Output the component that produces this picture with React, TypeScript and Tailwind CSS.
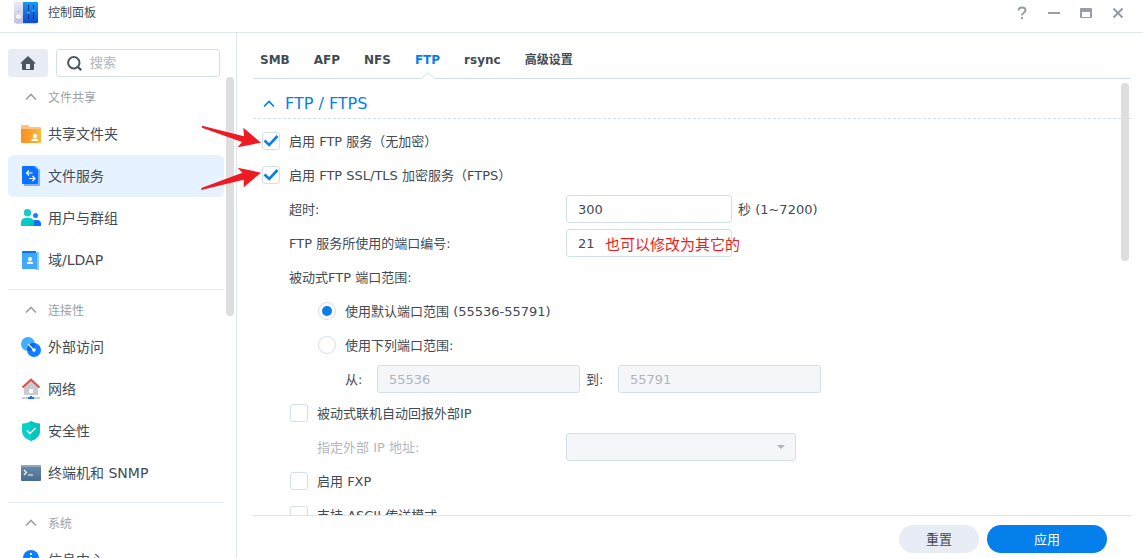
import React, { useState } from "react";
import clsx from "clsx";

interface NavItem {
  label: string;
  icon: React.ReactNode;
}

interface NavGroup {
  title: string;
  items: NavItem[];
}

const SharedFolderIcon = () => (
  <svg viewBox="0 0 20 20" className="size-5">
    <defs>
      <linearGradient id="folder" x1="0" x2="1">
        <stop offset="0" stopColor="#fb8f1f" />
        <stop offset="1" stopColor="#feb73c" />
      </linearGradient>
    </defs>
    <path d="M0 2a1 1 0 0 1 1-1h6l2 2h10a1 1 0 0 1 1 1v3H0z" fill="#fdc37e" />
    <path d="M0 5h20v13a1 1 0 0 1-1 1H1a1 1 0 0 1-1-1z" fill="url(#folder)" />
    <circle cx="14" cy="12" r="2.2" fill="#fff" />
    <path d="M10.500 17v-1q0-1.300 1.500-1.300h3.500q1.500 0 1.500 1.300v1z" fill="#fff" />
  </svg>
);

const FileServicesIcon = () => (
  <svg viewBox="0 0 20 20" className="size-5">
    <path d="M3 0h12l4 4v15a1 1 0 0 1-1 1H3z" fill="#77b0ff" />
    <path d="M2 0h11l4 4v13a1 1 0 0 1-1 1H2a1 1 0 0 1-1-1V1a1 1 0 0 1 1-1z" fill="#0a72ff" />
    <path d="M11.500 7H5.500m2.500-2.500L5.500 7 8 9.500M8 12.500h6M11.500 10l2.500 2.500-2.500 2.500" fill="none" stroke="#fff" strokeWidth="1.200" />
  </svg>
);

const UsersIcon = () => (
  <svg viewBox="0 0 20 20" className="size-5">
    <circle cx="14.500" cy="7.500" r="2.500" fill="#1282ff" />
    <path d="M11 18v-3q0-3 3-3h2q4 0 4 4v2z" fill="#0a72ff" />
    <circle cx="6.500" cy="4.700" r="3.700" fill="#1bc9c4" />
    <path d="M0 18v-3q0-5 5-5h3q5 0 5 5v3z" fill="#06ccc5" />
    <path d="M9 18v-3l4-1v4z" fill="#06bdb8" />
  </svg>
);

const LdapIcon = () => (
  <svg viewBox="0 0 20 20" className="size-5">
    <path d="M2 1h13v3H1V2a1 1 0 0 1 1-1z" fill="#0a72ff" />
    <path d="M15 2h3v18h-3z" fill="#8acbff" />
    <path d="M1 3h15v16H2a1 1 0 0 1-1-1z" fill="#41a8ff" />
    <circle cx="9" cy="9" r="2" fill="#fff" />
    <path d="M6 14v-1q0-1.300 1.500-1.300h3q1.500 0 1.500 1.300v1z" fill="#fff" />
  </svg>
);

const ExternalIcon = () => (
  <svg viewBox="0 0 20 20" className="size-5">
    <circle cx="7" cy="7" r="7" fill="#3fb0ff" />
    <circle cx="13" cy="13" r="7" fill="#1180ff" />
    <path d="M6.200 12.300A7 7 0 0 1 12.500 6 7 7 0 0 1 14 7.200 7 7 0 0 1 7.400 14z" fill="#0466ee" />
    <path d="m7 7 5 5" stroke="#fff" strokeWidth="1.300" />
    <circle cx="13" cy="13" r="1.800" fill="#fff" />
  </svg>
);

const NetworkIcon = () => (
  <svg viewBox="0 0 20 22" className="h-[22px] w-5">
    <path d="M3 9l7-6.500L17 9v8H3z" fill="#c9cbd0" />
    <path d="M1.500 9.500 10 1.700l8.500 7.800" fill="none" stroke="#d9504e" strokeWidth="2" />
    <path d="M8 11h4v4H8z" fill="#fff" />
    <path d="M1 19h18v2H1z" fill="#c9cfd6" />
    <path d="M9 18h2v1h2v2H7v-2h2z" fill="#0a78ff" />
  </svg>
);

const SecurityIcon = () => (
  <svg viewBox="0 0 20 20" className="size-5">
    <path d="M10 0q4 2.500 9 2.700V10q0 7-9 10-9-3-9-10V2.700Q6 2.500 10 0z" fill="#09d1ca" />
    <path d="M10 0q4 2.500 9 2.700V10q0 7-9 10z" fill="#06c5bf" />
    <path d="m6 9.500 3 3 5.500-5.500" fill="none" stroke="#fff" strokeWidth="1.500" />
  </svg>
);

const TerminalIcon = () => (
  <svg viewBox="0 0 20 20" className="size-5">
    <defs>
      <linearGradient id="terminal" x1="0" y1="0" x2="0" y2="1">
        <stop offset="0" stopColor="#6b8cad" />
        <stop offset="1" stopColor="#476b90" />
      </linearGradient>
    </defs>
    <rect y="2" width="20" height="16" rx="1" fill="url(#terminal)" />
    <path d="M0 4V3a1 1 0 0 1 1-1h18a1 1 0 0 1 1 1v1z" fill="#8fa9c2" />
    <path d="m3 7 2.500 2.500L3 12M7 12h5" fill="none" stroke="#fff" strokeWidth="1.200" />
  </svg>
);

const InfoIcon = () => (
  <svg viewBox="0 0 20 20" className="size-5">
    <circle cx="10" cy="8" r="8" fill="#0f7dff" />
    <path d="M9 3h2v2H9zM9 7h2v6H9z" fill="#fff" />
  </svg>
);

const ControlPanelIcon = () => (
  <svg viewBox="0 0 24 24" className="size-6">
    <defs>
      <linearGradient id="knob" x1="0" y1="0" x2="0" y2="1">
        <stop offset="0" stopColor="#e9e9fb" />
        <stop offset="1" stopColor="#c3c4d8" />
      </linearGradient>
      <linearGradient id="mixer" x1="0" y1="0" x2="0" y2="1">
        <stop offset="0" stopColor="#149cf2" />
        <stop offset="1" stopColor="#1149d6" />
      </linearGradient>
    </defs>
    <path d="M1 22h22l-1 2H2z" fill="#d3d5dc" />
    <path d="M1 2h9v21H1a1 1 0 0 1-1-1V3a1 1 0 0 1 1-1z" fill="url(#knob)" />
    <path d="M9 2h14a1 1 0 0 1 1 1v19a1 1 0 0 1-1 1H9z" fill="url(#mixer)" />
    <circle cx="4.500" cy="11.500" r=".5" fill="#777a90" />
    <circle cx="4.500" cy="17" r="2.700" fill="#a9abc0" />
    <circle cx="4.500" cy="16.500" r="2.600" fill="#f2f2fb" />
    <path d="M14.500 5v14M19.500 5v14" stroke="#07327f" />
    <circle cx="14.500" cy="12.500" r="1.600" fill="#2d97ff" />
    <circle cx="19.500" cy="10.500" r="1.600" fill="#2d97ff" />
  </svg>
);

const Chevron = ({ className }: { className?: string }) => (
  <svg viewBox="0 0 12 8" className={clsx("h-2 w-3 shrink-0", className)}>
    <path d="m1 6.500 5-5 5 5" fill="none" stroke="currentColor" strokeWidth="1.700" />
  </svg>
);

const groups: NavGroup[] = [
  {
    title: "文件共享",
    items: [
      { label: "共享文件夹", icon: <SharedFolderIcon /> },
      { label: "文件服务", icon: <FileServicesIcon /> },
      { label: "用户与群组", icon: <UsersIcon /> },
      { label: "域/LDAP", icon: <LdapIcon /> },
    ],
  },
  {
    title: "连接性",
    items: [
      { label: "外部访问", icon: <ExternalIcon /> },
      { label: "网络", icon: <NetworkIcon /> },
      { label: "安全性", icon: <SecurityIcon /> },
      { label: "终端机和 SNMP", icon: <TerminalIcon /> },
    ],
  },
  {
    title: "系统",
    items: [{ label: "信息中心", icon: <InfoIcon /> }],
  },
];

const tabs = ["SMB", "AFP", "NFS", "FTP", "rsync", "高级设置"];

const TitleBar = () => (
  <header className="flex h-[33px] shrink-0 items-start justify-between border-b border-[#dfe6ee] pr-[9px] pl-3.5">
    <div className="flex h-6 items-center gap-2.5">
      <ControlPanelIcon />
      <h1 className="pt-0.5 text-xs">控制面板</h1>
    </div>
    <div className="flex text-[#979ea7]">
      <button aria-label="帮助" className="flex h-[26px] w-8 items-center justify-center">
        <svg viewBox="0 0 12 14" className="h-3.5 w-3">
          <path d="M2.500 4.500C2.500 2.500 4 1.500 6 1.500s3.500 1 3.500 2.900C9.500 6.700 6 6.800 6 9.500" fill="none" stroke="currentColor" strokeWidth="2" />
          <path d="M5 11h2v2H5z" fill="currentColor" />
        </svg>
      </button>
      <button aria-label="最小化" className="flex h-[26px] w-8 items-center justify-center">
        <svg viewBox="0 0 12 12" className="size-3">
          <path d="M0 5h12v2H0z" fill="currentColor" />
        </svg>
      </button>
      <button aria-label="最大化" className="flex h-[26px] w-8 items-center justify-center">
        <svg viewBox="0 0 12 10" className="h-2.5 w-3">
          <path d="M0 1a1 1 0 0 1 1-1h10a1 1 0 0 1 1 1v8a1 1 0 0 1-1 1H1a1 1 0 0 1-1-1zm2 3v5h8V4z" fill="currentColor" fillRule="evenodd" />
        </svg>
      </button>
      <button aria-label="关闭" className="flex h-[26px] w-8 items-center justify-center">
        <svg viewBox="0 0 12 12" className="size-3">
          <path d="m1.500 1.500 9 9m0-9-9 9" stroke="currentColor" strokeWidth="2.200" />
        </svg>
      </button>
    </div>
  </header>
);

const Sidebar = () => {
  const [selected, setSelected] = useState("文件服务");

  return (
    <aside className="flex w-[237px] shrink-0 flex-col border-r border-[#dfe6ee] pt-4">
      <div className="flex gap-2 pr-4 pl-2">
        <button aria-label="主页" className="flex h-7 w-10 items-center justify-center rounded-[3px] bg-[#e8edf5] text-[#4d5761]">
          <svg viewBox="0 0 16 14" className="h-3.5 w-4">
            <path d="M8 0 0 7.500h2V13a1 1 0 0 0 1 1h10a1 1 0 0 0 1-1V7.500h2zM6 8h4v5H6z" fill="currentColor" fillRule="evenodd" />
          </svg>
        </button>
        <label className="flex h-7 min-w-0 flex-1 items-center gap-2 rounded-[3px] border border-[#d3dfe9] px-2.5">
          <svg viewBox="0 0 15 15" className="size-[15px] shrink-0 text-[#4d5761]">
            <circle cx="6.800" cy="6.800" r="5.700" fill="none" stroke="currentColor" strokeWidth="2" />
            <path d="m10.500 10.500 3.700 3.700" stroke="currentColor" strokeWidth="2.400" />
          </svg>
          <input aria-label="搜索" placeholder="搜索" className="w-full min-w-0 text-[13px] outline-none placeholder:text-[#b0b5ba]" />
        </label>
      </div>
      <div className="relative min-h-0 flex-1 overflow-hidden pt-1 pr-3 pl-2">
        {groups.map((group, i) => (
          <nav key={group.title} aria-label={group.title} className={clsx(i > 0 && "mt-2 border-t border-[#e6ebf1] pt-1")}>
            <h2 className="flex h-8 items-center gap-[11px] pl-[17px] text-xs text-[#9ba1a8]">
              <Chevron />
              <span className="pt-0.5">{group.title}</span>
            </h2>
            {group.items.map((item) => (
              <button
                key={item.label}
                onClick={() => setSelected(item.label)}
                className={clsx(
                  "flex h-[42px] w-full items-center gap-[7px] rounded-md pl-[13px] text-sm",
                  selected === item.label && "bg-[#e6f2ff]"
                )}
              >
                {item.icon}
                {item.label}
              </button>
            ))}
          </nav>
        ))}
        <div className="absolute top-0 right-0.5 h-[239px] w-2 rounded-full bg-[#dedede]" />
      </div>
    </aside>
  );
};

interface OptionProps {
  label: string;
  checked?: boolean;
}

const CheckOption = ({ label, checked }: OptionProps) => (
  <label className="flex h-[34px] w-fit items-center gap-[9px]">
    <span className="grid size-[18px]">
      <input
        type="checkbox"
        defaultChecked={checked}
        className="peer col-start-1 row-start-1 size-[18px] appearance-none rounded-[3px] border border-[#d3dfe9] bg-white"
      />
      <svg viewBox="0 0 18 18" className="pointer-events-none invisible col-start-1 row-start-1 peer-checked:visible">
        <path d="m2.500 8.500 4.700 4.500 8.300-9" fill="none" stroke="#057feb" strokeWidth="2.600" />
      </svg>
    </span>
    <span className="pt-0.5">{label}</span>
  </label>
);

const RadioOption = ({ label, checked }: OptionProps) => (
  <label className="flex h-[34px] w-fit items-center gap-[9px]">
    <span className="grid size-[18px] place-items-center">
      <input
        type="radio"
        name="port-range"
        defaultChecked={checked}
        className="peer col-start-1 row-start-1 size-[18px] appearance-none rounded-full border border-[#d3dfe9] bg-white"
      />
      <span className="pointer-events-none invisible col-start-1 row-start-1 size-2.5 rounded-full bg-[#057feb] peer-checked:visible" />
    </span>
    <span className="pt-0.5">{label}</span>
  </label>
);

const inputClass =
  "h-7 rounded-[3px] border border-[#d3dfe9] bg-white px-[11px] outline-none disabled:bg-[#f4f6fa] disabled:text-[#aeb4ba]";

const FtpForm = () => (
  <form className="min-h-0 flex-1 overflow-hidden text-[13px]">
    <h2 className="flex h-10 items-center gap-2.5 border-b border-dashed border-[#d0dde7] pt-2.5 pl-2.5 text-base text-[#057feb]">
      <Chevron />
      FTP / FTPS
    </h2>
    <div className="pt-[5px] pl-[9px]">
      <CheckOption label="启用 FTP 服务（无加密）" checked />
      <CheckOption label="启用 FTP SSL/TLS 加密服务（FTPS）" checked />
      <div className="pl-[27px]">
        <div className="flex h-[34px] items-center">
          <label htmlFor="timeout" className="w-[277px] pt-0.5">超时:</label>
          <input id="timeout" defaultValue="300" className={clsx(inputClass, "w-[166px]")} />
          <span className="pt-0.5 pl-1.5">秒 (1~7200)</span>
        </div>
        <div className="relative flex h-[34px] items-center">
          <label htmlFor="port" className="w-[277px] pt-0.5">FTP 服务所使用的端口编号:</label>
          <input id="port" defaultValue="21" className={clsx(inputClass, "w-[166px]")} />
          <span className="pointer-events-none absolute top-[9px] left-[316px] text-[15px] leading-5 text-[#ed1c24]">
            也可以修改为其它的
          </span>
        </div>
        <p className="flex h-[34px] items-center pt-0.5">被动式FTP 端口范围:</p>
        <div className="pl-[29px]">
          <RadioOption label="使用默认端口范围 (55536-55791)" checked />
          <RadioOption label="使用下列端口范围:" />
          <div className="flex h-[34px] items-center pl-[27px]">
            <label htmlFor="from" className="w-8 pt-0.5">从:</label>
            <input id="from" disabled defaultValue="55536" className={clsx(inputClass, "w-[203px]")} />
            <label htmlFor="to" className="w-[38px] pt-0.5 pl-1.5">到:</label>
            <input id="to" disabled defaultValue="55791" className={clsx(inputClass, "w-[203px]")} />
          </div>
        </div>
        <div className="pl-px">
          <CheckOption label="被动式联机自动回报外部IP" />
          <div className="flex h-[34px] items-center pl-[27px]">
            <label htmlFor="external-ip" className="w-[249px] pt-0.5 text-[#b3b8bd]">指定外部 IP 地址:</label>
            <div className="grid w-[230px] items-center">
              <select id="external-ip" disabled className={clsx(inputClass, "col-start-1 row-start-1 appearance-none")} />
              <svg viewBox="0 0 8 4" className="pointer-events-none col-start-1 row-start-1 mr-[11px] h-1 w-2 justify-self-end">
                <path d="M0 0h8L4 4z" fill="#aeb4ba" />
              </svg>
            </div>
          </div>
          <CheckOption label="启用 FXP" />
          <CheckOption label="支持 ASCII 传送模式" />
        </div>
      </div>
    </div>
  </form>
);

const Arrows = () => (
  <svg viewBox="0 0 360 240" className="pointer-events-none absolute top-[115px] left-[190px] h-20 w-[120px]">
    <path d="M36 32 36 38 156 81 143 97 213 83 160 38 162 64z" fill="#ed1c24" />
    <path d="M34 219 34 225 161 194 161 217 213 173 143 158 157 173z" fill="#ed1c24" />
  </svg>
);

const App = () => {
  const [activeTab, setActiveTab] = useState("FTP");

  return (
    <div className="relative flex h-screen flex-col overflow-hidden bg-white font-['DejaVu_Sans','Noto_Sans_CJK_SC',sans-serif] text-[#414b55]">
      <TitleBar />
      <div className="flex min-h-0 flex-1">
        <Sidebar />
        <main className="flex min-w-0 flex-1 flex-col pr-3 pl-4">
          <div role="tablist" className="flex h-[46px] shrink-0 gap-6 border-b border-[#d0dde7] pt-2 pl-[7px]">
            {tabs.map((tab) => (
              <button
                key={tab}
                role="tab"
                aria-selected={activeTab === tab}
                onClick={() => setActiveTab(tab)}
                className={clsx("relative text-xs font-bold", activeTab === tab && "text-[#057feb]")}
              >
                {tab}
                {activeTab === tab && (
                  <svg viewBox="0 0 14 8" className="absolute -bottom-px left-1/2 h-2 w-3.5 -translate-x-1/2">
                    <path d="M0 8v-.5L1 7.500 7 1.500l6 6h1V8z" fill="#fff" />
                    <path d="M0 7.500h1l6-6 6 6h1" fill="none" stroke="#d0dde7" />
                  </svg>
                )}
              </button>
            ))}
          </div>
          <div className="relative flex min-h-0 flex-1 flex-col">
            <FtpForm />
            <div className="absolute top-1 right-0.5 h-[178px] w-2 rounded-full bg-[#dedede]" />
          </div>
          <footer className="flex h-[43px] shrink-0 justify-end gap-2 border-t border-[#dfe6ee] pt-[9px] pr-6 text-[13px]">
            <button className="h-7 w-20 rounded-full bg-[#e8edf5] pt-0.5">重置</button>
            <button className="h-7 w-[120px] rounded-full bg-[#057feb] pt-0.5 text-white">应用</button>
          </footer>
        </main>
      </div>
      <Arrows />
    </div>
  );
};
export default App;
